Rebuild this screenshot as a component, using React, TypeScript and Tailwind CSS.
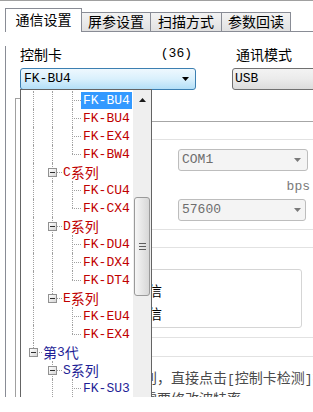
import React from 'react'

// 字体
const mono = "font-['Liberation_Mono','Noto_Sans_CJK_SC',monospace] text-[13px]"
const cjk = "font-['Noto_Sans_CJK_SC',sans-serif] text-[14px]"

type Guide = 'pipe' | 'blank'

interface Row {
  label: string
  level: number
  guides: Guide[]
  last: boolean
  node?: boolean
  tone: 'red' | 'blue'
  selected?: boolean
}

const rows: Row[] = [
  { label: 'FK-BU4', level: 2, guides: ['pipe', 'pipe'], last: false, tone: 'red', selected: true },
  { label: 'FK-BU4', level: 2, guides: ['pipe', 'pipe'], last: false, tone: 'red' },
  { label: 'FK-EX4', level: 2, guides: ['pipe', 'pipe'], last: false, tone: 'red' },
  { label: 'FK-BW4', level: 2, guides: ['pipe', 'pipe'], last: true, tone: 'red' },
  { label: 'C系列', level: 1, guides: ['pipe'], last: false, node: true, tone: 'red' },
  { label: 'FK-CU4', level: 2, guides: ['pipe', 'pipe'], last: false, tone: 'red' },
  { label: 'FK-CX4', level: 2, guides: ['pipe', 'pipe'], last: true, tone: 'red' },
  { label: 'D系列', level: 1, guides: ['pipe'], last: false, node: true, tone: 'red' },
  { label: 'FK-DU4', level: 2, guides: ['pipe', 'pipe'], last: false, tone: 'red' },
  { label: 'FK-DX4', level: 2, guides: ['pipe', 'pipe'], last: false, tone: 'red' },
  { label: 'FK-DT4', level: 2, guides: ['pipe', 'pipe'], last: true, tone: 'red' },
  { label: 'E系列', level: 1, guides: ['pipe'], last: true, node: true, tone: 'red' },
  { label: 'FK-EU4', level: 2, guides: ['pipe', 'blank'], last: false, tone: 'red' },
  { label: 'FK-EX4', level: 2, guides: ['pipe', 'blank'], last: true, tone: 'red' },
  { label: '第3代', level: 0, guides: [], last: true, node: true, tone: 'blue' },
  { label: 'S系列', level: 1, guides: ['blank'], last: false, node: true, tone: 'blue' },
  { label: 'FK-SU3', level: 2, guides: ['blank', 'pipe'], last: false, tone: 'blue' },
]

const widths = ['w-[19px]', 'w-[20px]', 'w-[19px]']

function Mixed({ text }: { text: string }) {
  const parts = text.split(/([\u4e00-\u9fff]+)/).filter(Boolean)
  return (
    <>
      {parts.map((p, i) =>
        /[\u4e00-\u9fff]/.test(p) ? (
          <span key={i} className={cjk}>{p}</span>
        ) : (
          <span key={i} className={mono}>{p}</span>
        )
      )}
    </>
  )
}

function DownArrow({ color }: { color: string }) {
  return (
    <svg width="7" height="4" viewBox="0 0 7 4">
      <path d="M0 0h7L3.5 4z" fill={color} />
    </svg>
  )
}

function TreeRow({ row }: { row: Row }) {
  const tone = row.selected
    ? 'bg-[#3399ff] text-white'
    : row.tone === 'red'
      ? 'text-[#c00000]'
      : 'text-[#1e1e96]'
  return (
    <div className="flex h-[18px] items-center pl-[2px]">
      {row.guides.map((g, i) => (
        <div key={i} className={`relative h-full shrink-0 ${widths[i]}`}>
          {g === 'pipe' && (
            <span className="absolute left-[10px] top-0 bottom-0 border-l border-dotted border-[#a0a0a0]" />
          )}
        </div>
      ))}
      <div className={`relative h-full shrink-0 ${widths[row.level]}`}>
        <span
          className={`absolute left-[10px] top-0 border-l border-dotted border-[#a0a0a0] ${row.last ? 'h-[9px]' : 'bottom-0'}`}
        />
        <span className="absolute left-[10px] right-0 top-[9px] border-t border-dotted border-[#a0a0a0]" />
        {row.node && (
          <span className="absolute left-[6px] top-[5px] h-[9px] w-[9px] border border-[#919191] bg-linear-to-br from-white to-[#d6d6d6]">
            <span className="absolute left-[1px] top-[3px] h-px w-[5px] bg-[#2f2f2f]" />
          </span>
        )}
      </div>
      <span className={`flex h-[17px] items-center whitespace-nowrap leading-[17px] ${row.node ? 'px-[1px]' : 'px-[2px]'} ${tone}`}>
        <Mixed text={row.label} />
      </span>
    </div>
  )
}

// 下拉列表（覆盖在面板上）
function CardList() {
  return (
    <div className="absolute left-[20px] top-[88px] z-10 flex h-[320px] w-[132px] border border-[#646464] bg-white">
      <div className="flex-1 pt-[1px]">
        {rows.map((r, i) => (
          <TreeRow key={i} row={r} />
        ))}
      </div>
      <div className="flex w-[18px] flex-col items-center bg-[#efefef]">
        <div className="flex h-[17px] w-full justify-center pt-[8px]">
          <svg width="7" height="4" viewBox="0 0 7 4">
            <path d="M0 4h7L3.5 0z" fill="#1a1a1a" />
          </svg>
        </div>
        <div className="mt-[90px] flex h-[99px] w-[16px] flex-col items-center justify-center gap-[2px] rounded-[3px] border border-[#9a9a9a] bg-linear-to-r from-[#f6f6f6] to-[#d7d7d7]">
          <span className="h-px w-[7px] bg-[#5e5e5e]" />
          <span className="h-px w-[7px] bg-[#5e5e5e]" />
          <span className="h-px w-[7px] bg-[#5e5e5e]" />
        </div>
      </div>
    </div>
  )
}

export default function App() {
  const tabs = ['屏参设置', '扫描方式', '参数回读']
  const tabWidths = ['w-[70px]', 'w-[72px]', 'w-[70px]']

  return (
    <div className={`flex h-[412px] w-[313px] flex-col overflow-hidden bg-white text-black ${cjk}`}>
      <div className="relative h-[397px] shrink-0 overflow-hidden border-t border-[#a0a0a0]">
        <div className="ml-[5px]">
          {/* 标签页 */}
          <div className="flex h-[31px] items-end border-b border-[#898c95]">
            <div className="relative z-[1] -mb-px flex h-[24px] w-[77px] shrink-0 justify-center border-x border-t border-[#898c95] bg-white pt-[2px] leading-[16px]">
              通信设置
            </div>
            {tabs.map((t, i) => (
              <div
                key={t}
                className={`-ml-px flex h-[19px] shrink-0 justify-center border-x border-t border-[#898c95] bg-linear-to-b from-[#f3f3f3] to-[#e1e1e1] leading-[16px] ${tabWidths[i]}`}
              >
                {t}
              </div>
            ))}
          </div>

          {/* 面板 */}
          <div className="h-[380px] border-l border-[#898c95]">
            <div className="mt-[14px] flex h-[16px] pl-[14px] leading-[16px]">
              <div className="flex w-[176px] shrink-0 justify-between pr-[4px]">
                <span>控制卡</span>
                <span className={`${mono} text-[12px]`}>(36)</span>
              </div>
              <span className="ml-[40px] shrink-0 whitespace-nowrap">通讯模式</span>
            </div>

            <div className="mt-[6px] flex h-[22px] pl-[14px]">
              <div className="flex w-[176px] shrink-0 items-center justify-between rounded-[3px] border border-[#3c7fb1] bg-linear-to-b from-[#eef8fe] via-[#d9f0fc] to-[#b3dff7] pl-[3px] pr-[6px]">
                <span className={mono}>FK-BU4</span>
                <DownArrow color="#000" />
              </div>
              <div className="ml-[36px] flex w-[120px] shrink-0 items-center rounded-[3px] border border-[#707070] bg-linear-to-b from-[#f3f3f3] via-[#ebebeb] to-[#dcdcdc] pl-[2px]">
                <span className={mono}>USB</span>
              </div>
            </div>

            <div className="flex">
              <div className="ml-[9px] mt-[8px] h-[320px] w-[65px] shrink-0 border-l border-t border-[#a0a0a0]" />
              <div className="min-w-0 flex-1">
                <div className="mt-[31px] h-px bg-[#a6a6a6]" />
                <div className="mt-[17px] h-px bg-[#e2e2e2]" />
                <div className="ml-[98px] mt-[9px] flex h-[22px] w-[130px] items-center justify-between rounded-[3px] border border-[#bdbdbd] bg-[#f4f4f4] pl-[3px] pr-[6px] text-[#6d6d6d]">
                  <span className={mono}>COM1</span>
                  <DownArrow color="#7a7a7a" />
                </div>
                <div className={`mt-[9px] h-[14px] pr-[3px] text-right leading-[14px] text-[#7a7a7a] ${mono}`}>bps</div>
                <div className="ml-[98px] mt-[5px] flex h-[22px] w-[128px] items-center justify-between rounded-[3px] border border-[#bdbdbd] bg-[#f4f4f4] pl-[3px] pr-[4px] text-[#6d6d6d]">
                  <span className={mono}>57600</span>
                  <DownArrow color="#7a7a7a" />
                </div>
                <div className="mt-[8px] h-px bg-[#e2e2e2]" />
                <div className="mt-[17px] h-px bg-[#e2e2e2]" />
                <div className="mt-[21px] h-[59px] w-[222px] rounded-[3px] border border-[#d5d5d5] pl-[25px] pt-[12px]">
                  <div className="h-[16px] leading-[16px]">串口通信</div>
                  <div className="mt-[7px] h-[16px] leading-[16px]">网口通信</div>
                </div>
                <div className="mt-[9px] h-px bg-[#e2e2e2]" />
                <div className="mt-[18px] h-px bg-[#e2e2e2]" />
                <div className="mt-[11px] whitespace-nowrap pl-[7px] leading-[18px] text-[#4a4a4a]">
                  <div>
                    若无法识别，直接点击<span className={mono}>[</span>控制卡检测<span className={mono}>]</span>按钮
                  </div>
                  <div>设置后不需要修改波特率。</div>
                </div>
              </div>
            </div>
          </div>
        </div>

        <CardList />
      </div>
    </div>
  )
}
